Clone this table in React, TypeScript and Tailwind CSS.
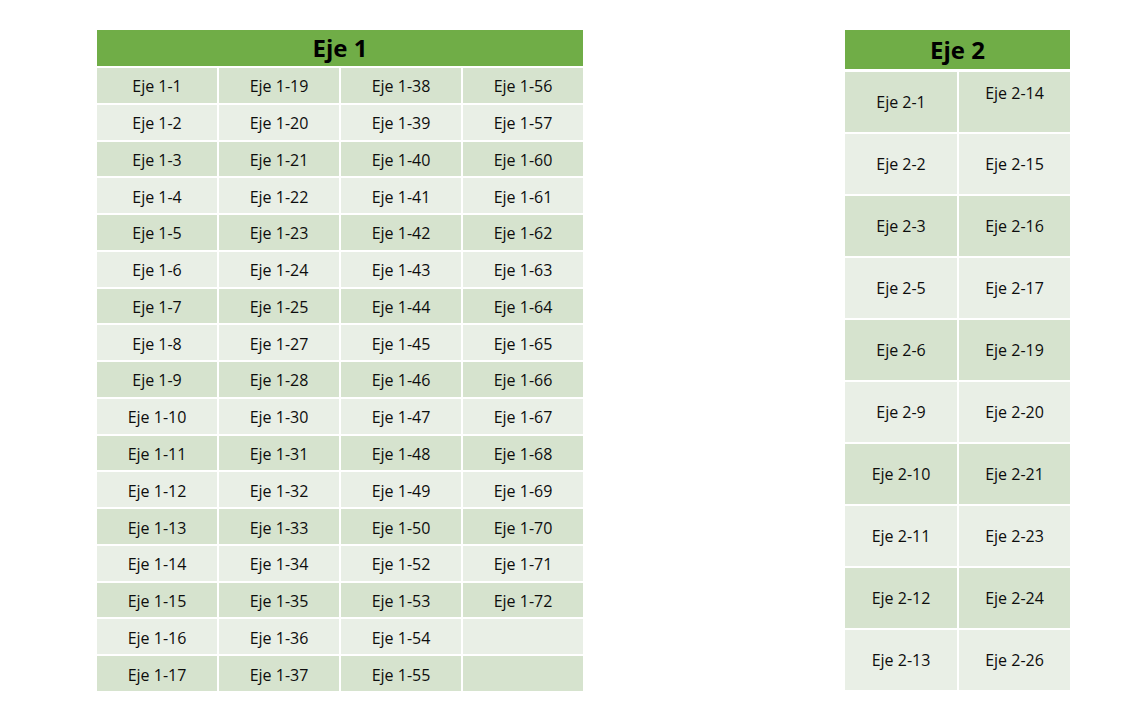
import React from "react";

const t1cols: string[][] = [
  ["1","2","3","4","5","6","7","8","9","10","11","12","13","14","15","16","17"],
  ["19","20","21","22","23","24","25","27","28","30","31","32","33","34","35","36","37"],
  ["38","39","40","41","42","43","44","45","46","47","48","49","50","52","53","54","55"],
  ["56","57","60","61","62","63","64","65","66","67","68","69","70","71","72","",""],
];

const t2rows: [string, string][] = [
  ["1","14"],["2","15"],["3","16"],["5","17"],["6","19"],["9","20"],["10","21"],["11","23"],["12","24"],["13","26"],
];

export default function App() {
  const font = { fontFamily: '"Open Sans", "Noto Sans", sans-serif' };
  return (
    <div className="w-[1134px] h-[720px] bg-white relative text-[#0d0d0d]" style={font}>
      <div className="flex pt-[30px] pl-[97px]">
        {/* Table 1 */}
        <div className="w-[486px] flex flex-col gap-[2px]">
          <div className="h-[36px] bg-[#70ad47] flex items-center justify-center text-[24px] font-bold text-black">Eje 1</div>
          <div className="h-[623px] grid grid-cols-4 grid-rows-[repeat(17,minmax(0,1fr))] gap-[2px]">
            {Array.from({ length: 17 }).map((_, r) =>
              [0, 1, 2, 3].map((c) => {
                const v = t1cols[c][r];
                return (
                  <div
                    key={`${r}-${c}`}
                    className={`flex items-center justify-center pt-[2px] text-[16px] ${r % 2 === 0 ? "bg-[#d6e3ce]" : "bg-[#e9efe6]"}`}
                  >
                    {v ? `Eje 1-${v}` : ""}
                  </div>
                );
              })
            )}
          </div>
        </div>
        {/* Table 2 */}
        <div className="ml-[262px] w-[225px] flex flex-col gap-[3px]">
          <div className="h-[39px] bg-[#70ad47] flex items-center justify-center text-[24px] font-bold text-black">Eje 2</div>
          <div className="h-[618px] grid grid-cols-[112px_1fr] grid-rows-[repeat(10,minmax(0,1fr))] gap-[2px]">
            {t2rows.map(([a, b], r) => (
              <React.Fragment key={r}>
                <div className={`flex items-center justify-center text-[16px] ${r % 2 === 0 ? "bg-[#d6e3ce]" : "bg-[#e9efe6]"}`}>
                  Eje 2-{a}
                </div>
                <div
                  className={`flex justify-center text-[16px] ${r === 0 ? "items-start pt-[9px]" : "items-center"} ${r % 2 === 0 ? "bg-[#d6e3ce]" : "bg-[#e9efe6]"}`}
                >
                  Eje 2-{b}
                </div>
              </React.Fragment>
            ))}
          </div>
        </div>
      </div>
    </div>
  );
}
